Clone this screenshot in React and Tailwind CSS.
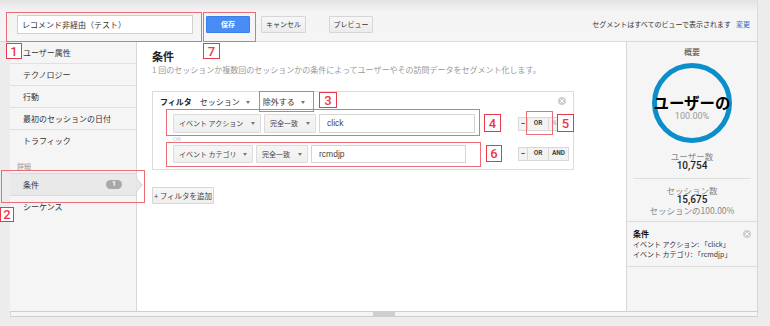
import { X } from 'lucide-react'

const font = "font-['Noto_Sans_CJK_JP','Noto_Sans',sans-serif]"
const num = "font-['Roboto','Noto_Sans_CJK_JP',sans-serif]"
const latin = "font-['Liberation_Sans','Noto_Sans_CJK_JP',sans-serif]"

function Caret() {
  return <span className="ml-[6px] inline-block shrink-0 border-x-[2.5px] border-t-[3px] border-x-transparent border-t-[#777]" />
}

function Select({ label, w }) {
  return (
    <div
      className={`flex h-full items-center justify-between rounded-[1px] border border-[#dcdcdc] bg-gradient-to-b from-[#f6f6f6] to-[#efefef] px-[5px] text-[7px] whitespace-nowrap text-[#444] ${w}`}
    >
      <span>{label}</span>
      <Caret />
    </div>
  )
}

function Logic({ andOff }) {
  return (
    <div className={`flex h-[14px] text-[6.5px] font-bold text-[#444] ${num}`}>
      <div className="flex w-[10px] items-center justify-center border border-[#d8d8d8] bg-[#f3f3f3] text-[8px]">−</div>
      <div className="flex w-[21px] items-center justify-center border border-l-0 border-[#d8d8d8] bg-[#f3f3f3]">OR</div>
      <div
        className={`flex w-[20px] items-center justify-center border border-l-0 border-[#d8d8d8] bg-[#f3f3f3] ${andOff ? 'text-[#c4c4c4]' : ''}`}
      >
        AND
      </div>
    </div>
  )
}

function CloseDot() {
  return (
    <div className="flex h-[8px] w-[8px] items-center justify-center rounded-full bg-[#cfcfcf] text-white">
      <X className="h-[6px] w-[6px]" strokeWidth={4} />
    </div>
  )
}

function Mark({ n, className }) {
  return (
    <div
      className={`absolute flex items-center justify-center border-[1.5px] border-[#e8394a] bg-white text-[13px] leading-none font-medium text-[#e8394a] ${num} ${className}`}
    >
      {n}
    </div>
  )
}

function Frame({ className }) {
  return <div className={`pointer-events-none absolute border border-[#ee6b78] ${className}`} />
}

const navItems = ['ユーザー属性', 'テクノロジー', '行動', '最初のセッションの日付']

export default function App() {
  return (
    <div className={`relative flex h-[326px] w-[770px] flex-col overflow-hidden bg-[#ececec] ${font}`}>
      {/* top bar */}
      <div className="flex h-[42px] w-[758px] shrink-0 items-center border-r border-b border-[#dadada] bg-gradient-to-b from-[#e3e3e3] via-[#f4f4f4] via-30% to-[#f5f5f5] pt-[8px]">
        <div className="ml-[17px] flex h-[19px] w-[176px] items-center border border-[#cfcfcf] bg-white pl-[4px] text-[8px] text-[#333]">
          レコメンド非経由（テスト）
        </div>
        <div className="ml-[13px] flex h-[17px] w-[44px] items-center justify-center rounded-[1px] border border-[#3a7ee8] bg-[#4a8cf6] text-[7px] font-bold text-white">
          保存
        </div>
        <div className="ml-[11px] flex h-[17px] w-[45px] items-center justify-center rounded-[1px] border border-[#d6d6d6] bg-gradient-to-b from-[#f7f7f7] to-[#ececec] text-[7px] text-[#333]">
          キャンセル
        </div>
        <div className="ml-[23px] flex h-[17px] w-[44px] items-center justify-center rounded-[1px] border border-[#d6d6d6] bg-gradient-to-b from-[#f7f7f7] to-[#ececec] text-[7px] text-[#333]">
          プレビュー
        </div>
        <div className="ml-auto pr-[7px] text-[7px] text-[#333]">
          セグメントはすべてのビューで表示されます<span className="ml-[5px] text-[#2a6fc9]">変更</span>
        </div>
      </div>

      {/* main panel */}
      <div className="ml-[10px] flex h-[269px] w-[748px] shrink-0 border-r border-[#d6d6d6]">
        {/* sidebar */}
        <div className="relative flex w-[127px] shrink-0 flex-col border-r border-[#d8d8d8] bg-[#f5f5f5] text-[8px] text-[#333]">
          {navItems.map((t) => (
            <div key={t} className="flex h-[22px] items-center border-b border-[#e0e0e0] pl-[13px]">
              {t}
            </div>
          ))}
          <div className="flex h-[22px] items-center pl-[13px]">トラフィック</div>
          <div className="flex h-[21px] items-end pb-[2px] pl-[7px] text-[7px] text-[#999]">詳細</div>
          <div className="relative flex h-[23px] items-center justify-between border-y border-[#dadada] bg-[#e9e9e9] pr-[14px] pl-[13px]">
            <span>条件</span>
            <span className={`flex h-[9px] w-[16px] items-center justify-center rounded-full bg-[#a8a8a8] text-[7px] leading-none font-bold text-white ${num}`}>
              1
            </span>
            <svg className="absolute top-[4px] right-[-7px]" width="7" height="14" viewBox="0 0 7 14">
              <path d="M0 0 L6 7 L0 14 Z" fill="#e9e9e9" stroke="#cfcfcf" strokeWidth="1" />
              <path d="M0 1 L0 13" stroke="#e9e9e9" strokeWidth="1.5" />
            </svg>
          </div>
          <div className="flex h-[22px] items-center pl-[13px]">シーケンス</div>
        </div>

        {/* content */}
        <div className="flex flex-1 flex-col bg-white pt-[7px] pl-[15px]">
          <div className="text-[11px] leading-[14px] font-bold text-[#222]">条件</div>
          <div className="mt-[1px] text-[8px] leading-[11px] text-[#999]">
            1 回のセッションか複数回のセッションかの条件によってユーザーやその訪問データをセグメント化します。
          </div>

          <div className="mt-[16px] flex h-[79px] w-[422px] flex-col border border-[#dcdcdc] pt-[1px] pr-[4px]">
            <div className="flex h-[18px] items-center text-[8px] text-[#333]">
              <span className="ml-[7px] font-bold text-[#222]">フィルタ</span>
              <span className="ml-[8px] flex items-center">
                セッション
                <Caret />
              </span>
              <span className="ml-[13px] flex items-center">
                除外する
                <Caret />
              </span>
              <span className="mt-[-2px] mr-[3px] ml-auto">
                <CloseDot />
              </span>
            </div>

            <div className="mt-[3px] flex h-[19px] items-center justify-between pl-[20px]">
              <div className="flex h-full gap-[3px]">
                <Select label="イベント アクション" w="w-[88px]" />
                <Select label="完全一致" w="w-[52px]" />
                <div className={`flex h-full w-[156px] items-center border border-[#d4d4d4] pl-[7px] text-[8.5px] text-[#444] ${latin}`}>
                  click
                </div>
              </div>
              <Logic andOff />
            </div>

            <div className={`h-[12px] pl-[20px] text-[6px] leading-[12px] text-[#c8c8c8] ${num}`}>OR</div>

            <div className="flex h-[18px] items-center justify-between pl-[20px]">
              <div className="flex h-full gap-[3px]">
                <Select label="イベント カテゴリ" w="w-[80px]" />
                <Select label="完全一致" w="w-[52px]" />
                <div className={`flex h-full w-[155px] items-center border border-[#d4d4d4] pl-[7px] text-[8.5px] text-[#444] ${latin}`}>
                  rcmdjp
                </div>
              </div>
              <Logic />
            </div>
          </div>

          <div className="mt-[17px] flex h-[17px] w-[62px] items-center justify-center rounded-[1px] border border-[#d6d6d6] bg-gradient-to-b from-[#f8f8f8] to-[#eeeeee] text-[7.5px] whitespace-nowrap text-[#444]">
            + フィルタを追加
          </div>
        </div>

        {/* summary */}
        <div className="flex w-[131px] shrink-0 flex-col border-l border-[#d8d8d8] bg-[#f5f5f5] text-[#888]">
          <div className="pt-[4px] text-center text-[8px] leading-[11px] text-[#444]">概要</div>
          <div className="mt-[6px] flex justify-center">
            <div className="flex h-[80px] w-[80px] flex-col items-center justify-center rounded-full border-[5px] border-[#0b8fcb] pt-[8px]">
              <div className="text-[15.5px] leading-[17px] font-bold whitespace-nowrap text-black">ユーザーの</div>
              <div className={`text-[9px] leading-[10px] text-[#999] ${num}`}>100.00%</div>
            </div>
          </div>
          <div className="mt-[8px] text-center text-[8.5px] leading-[10px]">ユーザー数</div>
          <div className={`text-center text-[10px] leading-[10px] font-medium text-[#222] ${num}`}>10,754</div>
          <div className="mx-[6px] mt-[7px] border-t border-[#dedede]" />
          <div className="mt-[6px] text-center text-[8.5px] leading-[10px]">セッション数</div>
          <div className={`text-center text-[10px] leading-[10px] font-medium text-[#222] ${num}`}>15,675</div>
          <div className="text-center text-[8.5px] leading-[10px]">セッションの100.00%</div>
          <div className="mt-[6px] border-t border-[#dedede]" />
          <div className="relative border-b border-[#dedede] pt-[7px] pb-[7px] pl-[6px] text-[7px] leading-[10px] text-[#333]">
            <div className="text-[8px] font-bold text-[#111]">条件</div>
            <div>イベント アクション: 「click」</div>
            <div>イベント カテゴリ: 「rcmdjp」</div>
            <div className="absolute top-[8px] right-[6px]">
              <CloseDot />
            </div>
          </div>
        </div>
      </div>

      {/* bottom strip */}
      <div className="ml-[10px] flex h-[6px] w-[748px] shrink-0 justify-center border border-[#cfcfcf] border-x-[#dadada] bg-[#f5f5f5]">
        <div className="h-[4px] w-[22px] bg-[#cfcfcf]" />
      </div>

      {/* annotations */}
      <Frame className="top-[12px] left-[6px] h-[30px] w-[196px]" />
      <Frame className="top-[12px] left-[203px] h-[30px] w-[53px]" />
      <Mark n="7" className="top-[43px] left-[203px] h-[16px] w-[17px]" />
      <Mark n="1" className="top-[43px] left-[6px] h-[16px] w-[16px]" />
      <Frame className="top-[170px] left-[1px] h-[33px] w-[144px]" />
      <Mark n="2" className="top-[207px] left-[0px] h-[15px] w-[14px]" />
      <Frame className="top-[91px] left-[259px] h-[21px] w-[55px]" />
      <Mark n="3" className="top-[92px] left-[319px] h-[16px] w-[18px]" />
      <Frame className="top-[109px] left-[166px] h-[27px] w-[314px]" />
      <Mark n="4" className="top-[114px] left-[484px] h-[18px] w-[17px]" />
      <Frame className="top-[111px] left-[526px] h-[24px] w-[27px]" />
      <Mark n="5" className="top-[114px] left-[557px] h-[18px] w-[17px]" />
      <Frame className="top-[142px] left-[166px] h-[25px] w-[315px]" />
      <Mark n="6" className="top-[145px] left-[486px] h-[17px] w-[16px]" />
    </div>
  )
}
